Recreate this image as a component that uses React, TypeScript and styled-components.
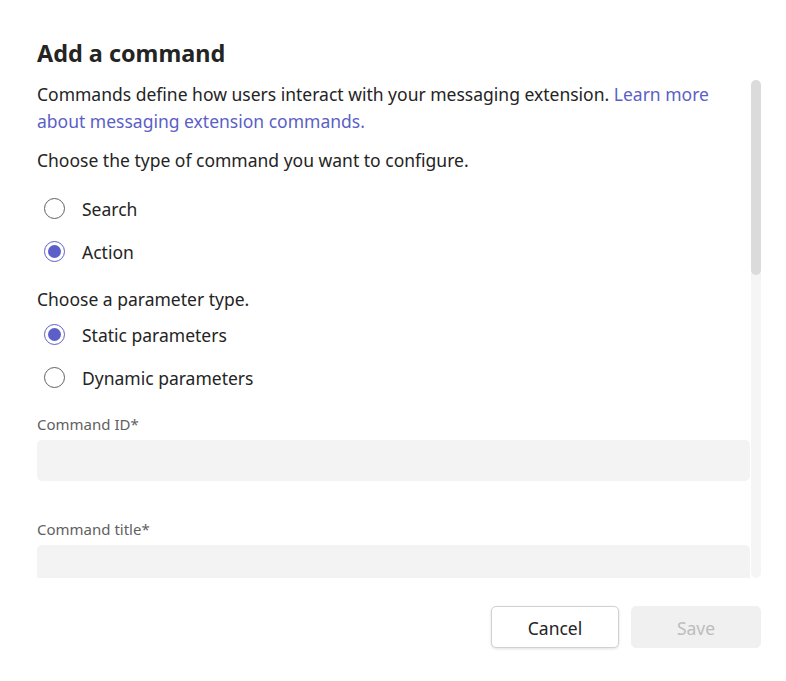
import React from "react";
import styled, { createGlobalStyle } from "styled-components";

const Global = createGlobalStyle`
  html, body { margin: 0; padding: 0; background: #ffffff; }
  body { font-family: "Noto Sans", "Open Sans", sans-serif; color: #242424; }
  * { box-sizing: border-box; }
`;

const Dialog = styled.div`
  width: 786px;
  height: 681px;
  padding: 38px 25px 0 37px;
  display: flex;
  flex-direction: column;
`;

const Title = styled.h1`
  margin: 0;
  font-size: 23.4px;
  line-height: 30px;
  font-weight: 700;
  color: #242424;
`;

const Body = styled.div`
  margin-top: 12px;
  height: 498px;
  display: flex;
  gap: 1px;
`;

const Content = styled.div`
  flex: 1;
  overflow: hidden;
  padding-top: 1px;
`;

const Para = styled.p<{ $mt?: number }>`
  margin: ${(p) => p.$mt ?? 0}px 0 0;
  font-size: 17.5px;
  line-height: 27px;
  color: #242424;
`;

const Link = styled.a`
  color: #5b5fc7;
  text-decoration: none;
`;

const RadioGroup = styled.div<{ $mt: number }>`
  margin-top: ${(p) => p.$mt}px;
  display: flex;
  flex-direction: column;
`;

const RadioRow = styled.label`
  height: 43px;
  display: flex;
  align-items: center;
  gap: 17px;
  padding-left: 7px;
  font-size: 17.5px;
  color: #242424;
`;

const Circle = styled.span<{ $checked: boolean }>`
  width: 21px;
  height: 21px;
  border-radius: 50%;
  border: 1.5px solid ${(p) => (p.$checked ? "#5b5fc7" : "#616161")};
  display: flex;
  align-items: center;
  justify-content: center;
  &::after {
    content: "";
    width: 13px;
    height: 13px;
    border-radius: 50%;
    background: #5b5fc7;
    display: ${(p) => (p.$checked ? "block" : "none")};
  }
`;

const FieldLabel = styled.div<{ $mt: number }>`
  margin-top: ${(p) => p.$mt}px;
  font-size: 15px;
  line-height: 20px;
  color: #616161;
`;

const Input = styled.div`
  margin-top: 6px;
  height: 41px;
  background: #f3f3f3;
  border-radius: 5px;
`;

const Track = styled.div`
  width: 10px;
  background: #f5f5f5;
  border-radius: 5px;
  display: flex;
  flex-direction: column;
`;

const Thumb = styled.div`
  height: 195px;
  background: #dbdbdb;
  border-radius: 5px;
`;

const Footer = styled.div`
  margin-top: 28px;
  display: flex;
  justify-content: flex-end;
  gap: 12px;
`;

const Button = styled.button<{ $primary?: boolean; $w: number }>`
  width: ${(p) => p.$w}px;
  height: 42px;
  padding-top: 2px;
  border-radius: 5px;
  font-family: inherit;
  font-size: 17.5px;
  cursor: pointer;
  border: 1px solid ${(p) => (p.$primary ? "#f0f0f0" : "#d1d1d1")};
  background: ${(p) => (p.$primary ? "#f0f0f0" : "#ffffff")};
  color: ${(p) => (p.$primary ? "#bdbdbd" : "#242424")};
  box-shadow: ${(p) => (p.$primary ? "none" : "0 1px 3px rgba(0,0,0,0.12)")};
`;

const Radio = ({ label, checked }: { label: string; checked: boolean }) => (
  <RadioRow>
    <Circle $checked={checked} />
    {label}
  </RadioRow>
);

export default function App() {
  return (
    <>
      <Global />
      <Dialog>
        <Title>Add a command</Title>
        <Body>
          <Content>
            <Para>
              Commands define how users interact with your messaging extension.{" "}
              <Link href="#">Learn more about messaging extension commands.</Link>
            </Para>
            <Para $mt={12}>Choose the type of command you want to configure.</Para>
            <RadioGroup $mt={13}>
              <Radio label="Search" checked={false} />
              <Radio label="Action" checked={true} />
            </RadioGroup>
            <Para $mt={13}>Choose a parameter type.</Para>
            <RadioGroup $mt={0}>
              <Radio label="Static parameters" checked={true} />
              <Radio label="Dynamic parameters" checked={false} />
            </RadioGroup>
            <FieldLabel $mt={15}>Command ID*</FieldLabel>
            <Input />
            <FieldLabel $mt={38}>Command title*</FieldLabel>
            <Input />
          </Content>
          <Track>
            <Thumb />
          </Track>
        </Body>
        <Footer>
          <Button $w={128}>Cancel</Button>
          <Button $w={130} $primary disabled>
            Save
          </Button>
        </Footer>
      </Dialog>
    </>
  );
}
